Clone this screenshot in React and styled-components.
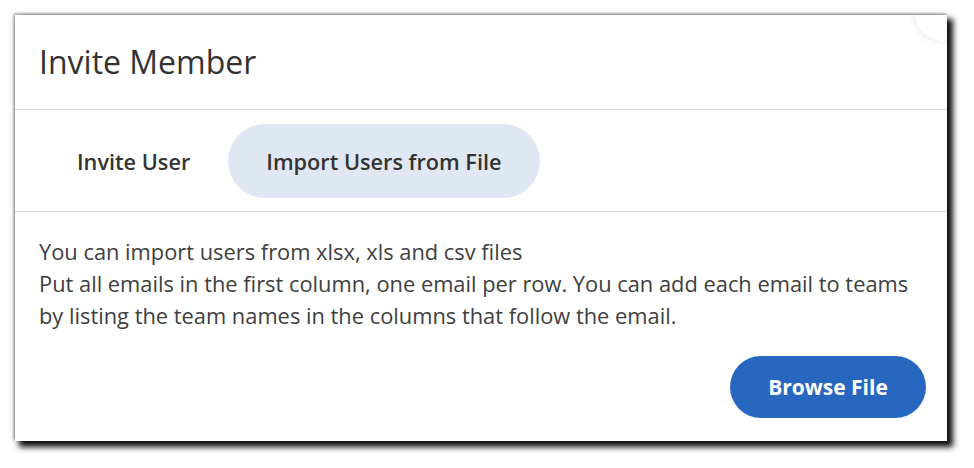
import styled, { createGlobalStyle } from "styled-components";

const Global = createGlobalStyle`
  html, body {
    margin: 0;
    background: #ffffff;
    font-family: "Open Sans", "Noto Sans", sans-serif;
  }
`;

const Page = styled.div`
  min-height: 100vh;
  box-sizing: border-box;
  padding: 15px 0 0 15px;
`;

// modal frame, the shadow sits heavy on the right/bottom
const Modal = styled.div`
  position: relative;
  width: 932px;
  height: 426px;
  background: #fff;
  display: flex;
  flex-direction: column;
  box-shadow: -1px -1px 3px rgba(0, 0, 0, 0.5), 5px 5px 6px 1px rgba(0, 0, 0, 0.95);
`;

// half hidden close bubble in the corner
const Corner = styled.div`
  position: absolute;
  top: 0;
  right: 0;
  width: 40px;
  height: 40px;
  overflow: hidden;
`;

const CloseBubble = styled.div`
  position: absolute;
  top: -30px;
  right: -24px;
  width: 56px;
  height: 56px;
  border-radius: 50%;
  background: #fff;
  box-shadow: 0 0 8px rgba(0, 0, 0, 0.12);
`;

const Header = styled.div`
  height: 94px;
  display: flex;
  align-items: center;
  padding: 0 24px;
  border-bottom: 1px solid #cfd9df;
`;

const Title = styled.h2`
  margin: 0;
  font-size: 32px;
  font-weight: 500;
  color: #333;
  padding-bottom: 1px;
`;

const Tabs = styled.div`
  display: flex;
  padding: 14px 24px 13px;
  border-bottom: 1px solid #cfd9df;
`;

const Tab = styled.button`
  border: none;
  height: 74px;
  padding: 0 38px;
  border-radius: 37px;
  font-family: inherit;
  font-size: 21.7px;
  font-weight: 600;
  color: #333;
  background: ${(p) => (p.$active ? "#dfe7f2" : "transparent")};
  cursor: pointer;
`;

const Body = styled.div`
  flex: 1;
  display: flex;
  flex-direction: column;
  padding: 24px 21px 23px 24px;
`;

const Text = styled.p`
  margin: 0;
  font-size: 21.85px;
  line-height: 32px;
  color: #404040;
`;

const Footer = styled.div`
  display: flex;
  justify-content: flex-end;
  margin-top: auto;
`;

const PrimaryButton = styled.button`
  border: none;
  height: 62px;
  width: 196px;
  border-radius: 31px;
  background: #2767c0;
  color: #fff;
  font-family: inherit;
  font-size: 21px;
  font-weight: 700;
  cursor: pointer;
`;

export default function App() {
  return (
    <Page>
      <Global />
      <Modal>
        <Corner>
          <CloseBubble />
        </Corner>
        <Header>
          <Title>Invite Member</Title>
        </Header>
        <Tabs>
          <Tab>Invite User</Tab>
          <Tab $active>Import Users from File</Tab>
        </Tabs>
        <Body>
          <Text>
            You can import users from xlsx, xls and csv files
            <br />
            Put all emails in the first column, one email per row. You can add each email to teams
            by listing the team names in the columns that follow the email.
          </Text>
          <Footer>
            <PrimaryButton>Browse File</PrimaryButton>
          </Footer>
        </Body>
      </Modal>
    </Page>
  );
}
